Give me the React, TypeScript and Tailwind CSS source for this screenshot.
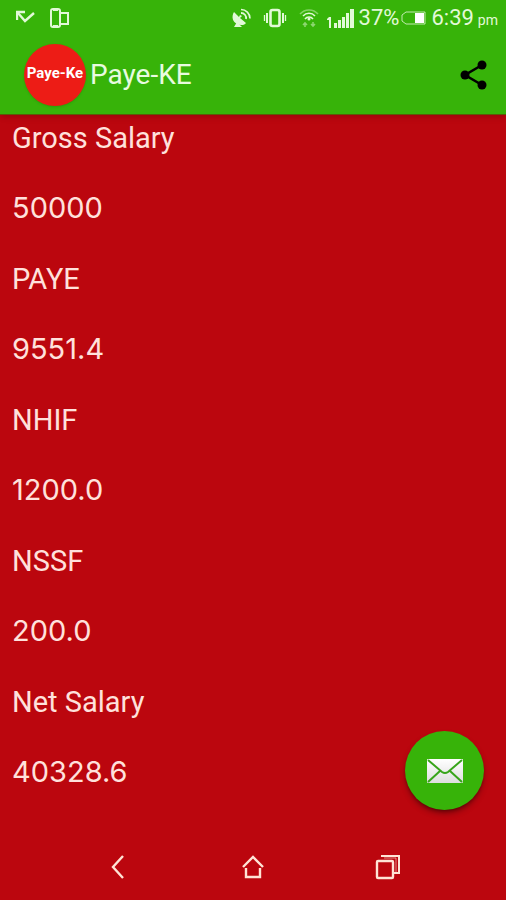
const rows = [
  { label: "Gross Salary", value: "50000" },
  { label: "PAYE", value: "9551.4" },
  { label: "NHIF", value: "1200.0" },
  { label: "NSSF", value: "200.0" },
  { label: "Net Salary", value: "40328.6" },
];

function StatusBar() {
  return (
    <div className="flex h-9 items-center justify-between pr-2 pl-4 text-[#e2f9d8]">
      <div className="flex items-center gap-3">
        {/* missed call */}
        <svg className="h-5 w-5" viewBox="0 0 20 20" fill="none" stroke="currentColor" strokeWidth={2.4}>
          <path d="M2 5l7 8 9-8" />
          <path d="M1 12V4h8" />
        </svg>
        {/* device link */}
        <svg className="h-6 w-6" viewBox="0 0 24 24" fill="none" stroke="currentColor">
          <rect x="3" y="3" width="9" height="18" rx="2" strokeWidth={2} />
          <path d="M5 4h5M5 20h5" strokeWidth={2} />
          <path d="M12 7h8v11h-8" strokeWidth={2} />
        </svg>
      </div>
      <div className="flex items-center">
        {/* satellite dish */}
        <svg className="mr-3 h-5 w-5" viewBox="0 0 20 20" fill="none" stroke="currentColor">
          <path d="M3 4c-3 5-1 10 3 12s8 1 9-1l-6-5 2-2-2-1-1 2z" fill="currentColor" stroke="none" />
          <path d="M10 5a5 5 0 0 1 5 6" strokeWidth={1.8} />
          <path d="M10 1.5a9 9 0 0 1 9 9" strokeWidth={1.6} />
          <path d="M6 14l-3 5h8z" fill="currentColor" stroke="none" />
        </svg>
        {/* vibrate */}
        <svg className="mr-3 h-5 w-6" viewBox="0 0 24 20" fill="none" stroke="currentColor">
          <rect x="7.5" y="2" width="9" height="16" rx="2" strokeWidth={2.6} />
          <path d="M4 5v10M20 5v10" strokeWidth={2} />
          <path d="M1.5 7v6M22.5 7v6" strokeWidth={1.3} />
        </svg>
        {/* wifi */}
        <svg className="mr-2 h-5 w-5" viewBox="0 0 20 20" fill="none" stroke="currentColor">
          <path d="M1 6a12 12 0 0 1 18 0" strokeWidth={1.5} opacity={0.45} />
          <path d="M4 8a8 8 0 0 1 12 0M6 11a5 5 0 0 1 8 0" strokeWidth={1.5} />
          <circle cx="10" cy="11" r="1.5" fill="currentColor" stroke="none" />
          <path d="M6 19v-4m-2 2l2-2 2 2M14 14v4m-2-2l2 2 2-2" strokeWidth={1.6} opacity={0.5} />
        </svg>
        {/* signal */}
        <svg className="mr-1 h-6 w-7" viewBox="0 0 28 24" fill="currentColor">
          <path d="M0 13l2-2h2v11H2v-8H0z" />
          <rect x="7" y="17" width="3" height="5" />
          <rect x="11" y="14" width="3" height="8" />
          <rect x="15" y="11" width="3" height="11" />
          <rect x="19" y="7" width="3" height="15" />
          <rect x="23" y="3" width="4" height="19" />
        </svg>
        <span className="text-[22px] leading-6">37%</span>
        {/* battery */}
        <svg className="mr-1 h-5 w-7" viewBox="0 0 28 20" fill="none" stroke="currentColor">
          <path d="M7 4h19v12H7l-4-3V7z" strokeWidth={1} opacity={0.8} />
          <rect x="16" y="5" width="9" height="10" fill="#ffffff" stroke="none" />
        </svg>
        <span className="flex items-baseline gap-1 text-[22px] leading-6">
          6:39 <small className="text-sm">pm</small>
        </span>
      </div>
    </div>
  );
}

function AppBar() {
  return (
    <div className="flex items-center justify-between pt-2 pr-4 pb-2 pl-6">
      <div className="flex items-center gap-1">
        <div className="flex size-[62px] items-center justify-center rounded-full bg-[#ed1c16] pb-1 text-[15px] font-bold text-white shadow-sm">
          <span className="whitespace-nowrap">Paye-Ke</span>
        </div>
        <h1 className="text-[28px] leading-9 text-[#e8fbe0]">Paye-KE</h1>
      </div>
      <button type="button" aria-label="Share" className="text-black">
        <svg className="size-8" viewBox="0 0 32 32" fill="currentColor">
          <path d="M24 6L7 16l17 10" fill="none" stroke="currentColor" strokeWidth={2.6} />
          <circle cx="24" cy="6" r="4.5" />
          <circle cx="7" cy="16" r="4.5" />
          <circle cx="24" cy="26" r="4.5" />
        </svg>
      </button>
    </div>
  );
}

function NavBar() {
  return (
    <nav className="flex h-[66px] items-center justify-around px-[50px] text-[#ffe3d5]">
      <button type="button" aria-label="Back">
        <svg className="size-7" viewBox="0 0 28 28" fill="none" stroke="currentColor" strokeWidth={2.4}>
          <path d="M19 3L9 14l10 11" />
        </svg>
      </button>
      <button type="button" aria-label="Home">
        <svg className="size-7" viewBox="0 0 28 28" fill="none" stroke="currentColor" strokeWidth={2.4}>
          <path d="M4 14L14 4l10 10" />
          <path d="M12 24H7v-9M12 24h9v-9" />
        </svg>
      </button>
      <button type="button" aria-label="Recent apps">
        <svg className="size-7" viewBox="0 0 28 28" fill="none" stroke="currentColor" strokeWidth={2.4}>
          <rect x="3" y="8" width="16" height="17" rx="1" />
          <path d="M7 3h18v17h-5" strokeWidth={2} />
          <path d="M10 5h12v14" strokeWidth={1} opacity={0.6} />
        </svg>
      </button>
    </nav>
  );
}

export default function App() {
  return (
    <div className="flex min-h-screen flex-col bg-[#bb060e] font-['Roboto',sans-serif]">
      <header className="border-b border-[#5c5a08] bg-[#37b309] shadow-md">
        <StatusBar />
        <AppBar />
      </header>

      <main className="flex flex-1 flex-col px-3 pt-[5px] pb-11">
        <dl className="flex flex-1 flex-col justify-between text-[29px] leading-9 text-[#ffe1dc]">
          {rows.map((row) => (
            <div key={row.label} className="contents">
              <dt>{row.label}</dt>
              <dd className="font-['Inter',sans-serif]">{row.value}</dd>
            </div>
          ))}
        </dl>
      </main>

      <NavBar />

      <button
        type="button"
        aria-label="Send email"
        className="fixed right-[22px] bottom-[90px] flex size-[79px] items-center justify-center rounded-full bg-[#37b309] shadow-md shadow-black/40"
      >
        <svg className="h-6 w-9" viewBox="0 0 36 24">
          <defs>
            <linearGradient id="envelope" x1="0" y1="0" x2="0" y2="1">
              <stop offset="0" stopColor="#ffffff" />
              <stop offset="1" stopColor="#dedede" />
            </linearGradient>
          </defs>
          <rect x="0" y="0" width="36" height="24" rx="1" fill="url(#envelope)" />
          <path d="M1 1l14 12q3 2 6 0L35 1M1 23l12-11M35 23L23 12" fill="none" stroke="#37a51a" strokeWidth={2} />
        </svg>
      </button>
    </div>
  );
}
